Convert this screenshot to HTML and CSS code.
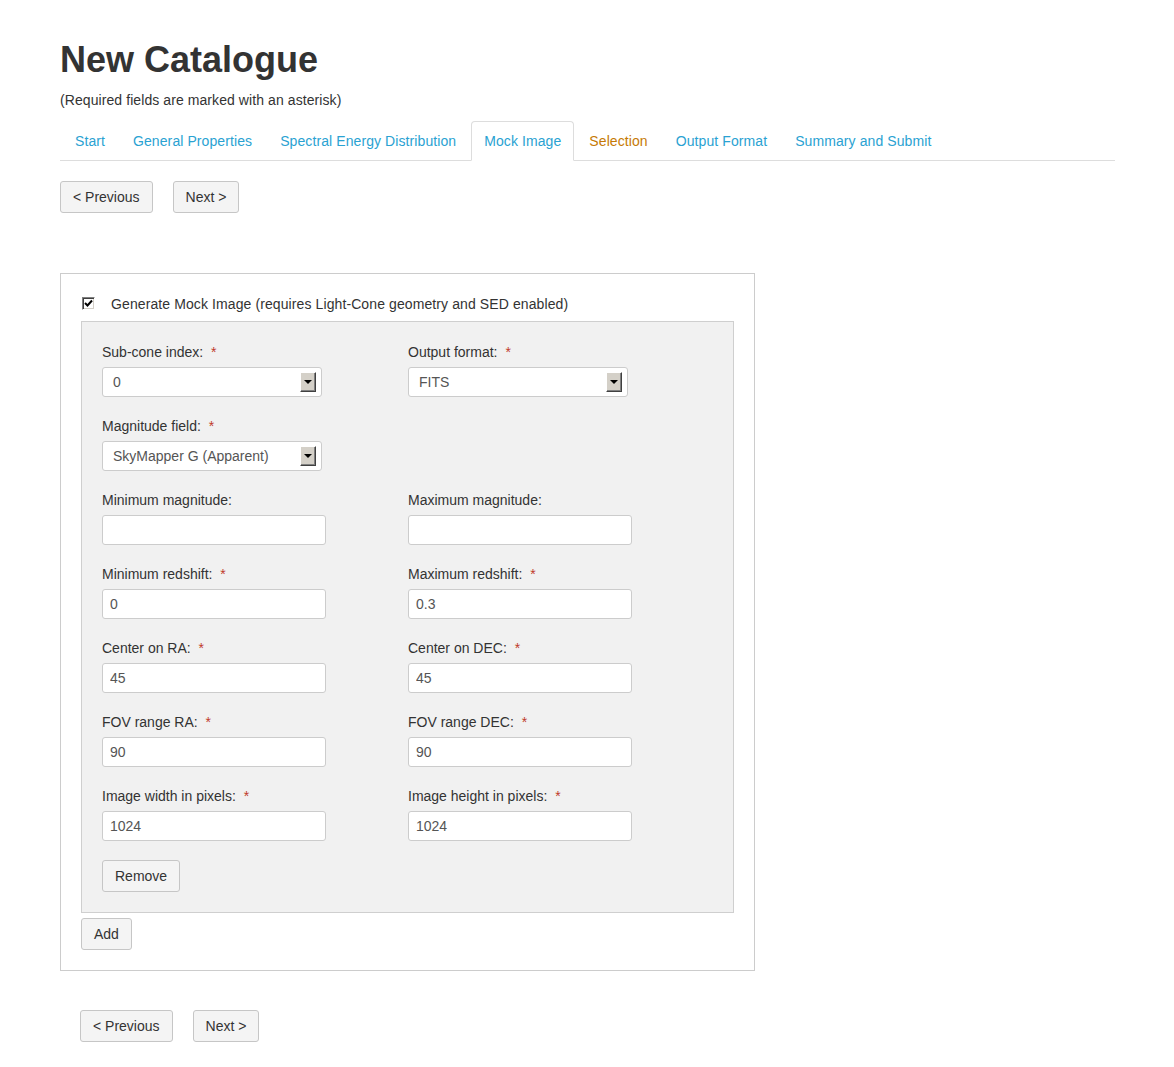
FILE: index.html
```html
<!DOCTYPE html>
<html>
<head>
<meta charset="utf-8">
<title>New Catalogue</title>
<link rel="stylesheet" href="styles.css">
</head>
<body>
<div class="page">
  <h1 class="title">New Catalogue</h1>
  <p class="note">(Required fields are marked with an asterisk)</p>
  <ul class="tabs">
    <li><a href="#">Start</a></li>
    <li><a href="#">General Properties</a></li>
    <li><a href="#">Spectral Energy Distribution</a></li>
    <li class="active"><a href="#">Mock Image</a></li>
    <li><a href="#" class="warn">Selection</a></li>
    <li><a href="#">Output Format</a></li>
    <li><a href="#">Summary and Submit</a></li>
  </ul>
  <div class="pager">
    <button class="btn">&lt; Previous</button>
    <button class="btn">Next &gt;</button>
  </div>

  <div class="mock-box">
    <div class="check-row">
      <span class="checkbox"><svg width="9" height="9" viewBox="0 0 9 9"><path d="M1 4 L3.5 6.5 L8 1.5" fill="none" stroke="#000" stroke-width="2"/></svg></span>
      <span>Generate Mock Image (requires Light-Cone geometry and SED enabled)</span>
    </div>
    <div class="panel">
      <div class="grid">
        <div class="field">
          <label>Sub-cone index: <span class="req">*</span></label>
          <div class="select"><span class="val">0</span><span class="arrow"><span class="tri"></span></span></div>
        </div>
        <div class="field">
          <label>Output format: <span class="req">*</span></label>
          <div class="select"><span class="val">FITS</span><span class="arrow"><span class="tri"></span></span></div>
        </div>
        <div class="field">
          <label>Magnitude field: <span class="req">*</span></label>
          <div class="select"><span class="val">SkyMapper G (Apparent)</span><span class="arrow"><span class="tri"></span></span></div>
        </div>
        <div class="field"></div>
        <div class="field">
          <label>Minimum magnitude:</label>
          <input class="input" type="text" value="">
        </div>
        <div class="field">
          <label>Maximum magnitude:</label>
          <input class="input" type="text" value="">
        </div>
        <div class="field">
          <label>Minimum redshift: <span class="req">*</span></label>
          <input class="input" type="text" value="0">
        </div>
        <div class="field">
          <label>Maximum redshift: <span class="req">*</span></label>
          <input class="input" type="text" value="0.3">
        </div>
        <div class="field">
          <label>Center on RA: <span class="req">*</span></label>
          <input class="input" type="text" value="45">
        </div>
        <div class="field">
          <label>Center on DEC: <span class="req">*</span></label>
          <input class="input" type="text" value="45">
        </div>
        <div class="field">
          <label>FOV range RA: <span class="req">*</span></label>
          <input class="input" type="text" value="90">
        </div>
        <div class="field">
          <label>FOV range DEC: <span class="req">*</span></label>
          <input class="input" type="text" value="90">
        </div>
        <div class="field">
          <label>Image width in pixels: <span class="req">*</span></label>
          <input class="input" type="text" value="1024">
        </div>
        <div class="field">
          <label>Image height in pixels: <span class="req">*</span></label>
          <input class="input" type="text" value="1024">
        </div>
      </div>
      <button class="btn remove">Remove</button>
    </div>
    <button class="btn add">Add</button>
  </div>

  <div class="pager bottom">
    <button class="btn">&lt; Previous</button>
    <button class="btn">Next &gt;</button>
  </div>
</div>
</body>
</html>
```

FILE: styles.css
```css
* { box-sizing: border-box; }
html, body { margin: 0; padding: 0; background: #fff; }
body {
  font-family: "Liberation Sans", Arial, Helvetica, sans-serif;
  font-size: 14px;
  line-height: 20px;
  color: #333;
}
.page {
  padding: 40px 59px 40px 60px;
}
.title {
  font-size: 36px;
  line-height: 39.6px;
  font-weight: bold;
  margin: 0 0 10px;
  color: #333;
}
.note {
  margin: 0 0 11px;
  letter-spacing: 0.08px;
}
.tabs {
  list-style: none;
  margin: 0;
  padding: 0 0 0 2px;
  display: flex;
  border-bottom: 1px solid #ddd;
}
.tabs li {
  margin: 0 2px -1px 0;
}
.tabs a {
  display: block;
  padding: 9px 12px;
  line-height: 20px;
  border: 1px solid transparent;
  border-radius: 4px 4px 0 0;
  color: #2aa2d2;
  text-decoration: none;
  letter-spacing: 0.09px;
}
.tabs a.warn { color: #c67a04; }
.tabs li.active a {
  background: #fff;
  border-color: #ddd #ddd transparent #ddd;
}
.pager {
  display: flex;
  gap: 20px;
  margin-top: 20px;
}
.pager.bottom {
  margin-top: 39px;
  margin-left: 20px;
}
.btn {
  font-family: inherit;
  font-size: 14px;
  line-height: 20px;
  color: #333;
  background: #f4f4f4;
  border: 1px solid #c6c6c6;
  border-radius: 3px;
  padding: 5px 12px;
  margin: 0;
  cursor: pointer;
}
.mock-box {
  margin-top: 60px;
  width: 695px;
  border: 1px solid #ccc;
  padding: 20px 20px 20px;
}
.check-row {
  display: flex;
  align-items: center;
  margin-bottom: 7px;
  letter-spacing: 0.1px;
}
.checkbox {
  width: 13px;
  height: 13px;
  margin: 0 16px 0 1px;
  background: #fff;
  border: 1px solid;
  border-color: #808080 #fff #fff #808080;
  box-shadow: inset 1px 1px 0 #404040, inset -1px -1px 0 #d4d0c8;
  display: flex;
  align-items: center;
  justify-content: center;
}
.panel {
  background: #f1f1f1;
  border: 1px solid #cfcfcf;
  padding: 20px;
}
.grid {
  display: grid;
  grid-template-columns: 306px 306px;
  row-gap: 19px;
}
.field label {
  display: block;
  margin-bottom: 5px;
}
.req {
  color: #c0392b;
  margin-left: 4px;
}
.select {
  width: 220px;
  height: 30px;
  background: #fff;
  border: 1px solid #ccc;
  border-radius: 3px;
  display: flex;
  align-items: center;
  padding: 0 5px 0 10px;
  color: #555;
}
.select .val { flex: 1; }
.arrow {
  width: 16px;
  height: 20px;
  background: #d4d0c8;
  border: 1px solid;
  border-color: #fff #404040 #404040 #fff;
  box-shadow: inset -1px -1px 0 #808080;
  display: flex;
  align-items: center;
  justify-content: center;
}
.tri {
  width: 0;
  height: 0;
  border-left: 4px solid transparent;
  border-right: 4px solid transparent;
  border-top: 4px solid #000;
  margin-right: 1px;
}
.input {
  display: block;
  width: 224px;
  height: 30px;
  border: 1px solid #ccc;
  border-radius: 3px;
  padding: 0 7px;
  font-family: inherit;
  font-size: 14px;
  color: #555;
  background: #fff;
  margin: 0;
  outline: none;
}
.remove {
  margin-top: 19px;
}
.add {
  margin-top: 5px;
}
```
